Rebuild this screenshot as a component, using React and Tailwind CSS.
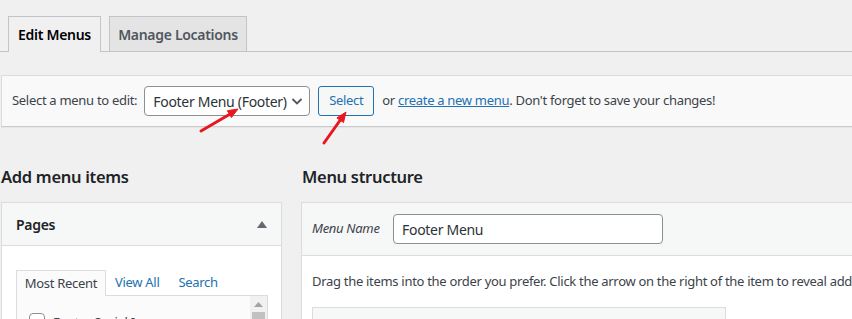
import React from 'react';

const Arrows = () => (
  <svg className="absolute left-0 top-0 pointer-events-none" width="852" height="319">
    <line x1="201" y1="131" x2="231" y2="113.5" stroke="#e8171f" strokeWidth="3" strokeLinecap="round" />
    <polygon points="238,109 231.4,117.5 227.4,110.7" fill="#e8171f" stroke="#e8171f" strokeWidth="1" />
    <line x1="324" y1="143" x2="341" y2="119" stroke="#e8171f" strokeWidth="3" strokeLinecap="round" />
    <polygon points="346,112 343.5,122.5 336.9,117.9" fill="#e8171f" stroke="#e8171f" strokeWidth="1" />
  </svg>
);

const Chevron = () => (
  <svg width="14" height="14" viewBox="0 0 14 14" className="text-[#50575e] shrink-0">
    <path d="M2.5 5 L7 9.5 L11.5 5" fill="none" stroke="currentColor" strokeWidth="1.8" />
  </svg>
);

export default function App() {
  return (
    <div className="relative w-[852px] h-[319px] overflow-hidden bg-[#f0f0f1] font-['Noto_Sans',sans-serif] text-[13px] tracking-[-0.3px] text-[#3c434a]">
      {/* tabs */}
      <div className="flex items-end h-[52px] border-b border-[#c3c4c7] pl-2 gap-2">
        <div className="w-[93px] h-[36px] -mb-px flex items-center justify-center border border-b-0 border-[#c3c4c7] bg-[#f0f0f1] text-[14px] font-semibold text-[#000] whitespace-nowrap">
          Edit Menus
        </div>
        <div className="w-[138px] h-[35px] flex items-center justify-center border border-b-0 border-[#c3c4c7] bg-[#e4e4e5] text-[14px] font-semibold text-[#50575e] whitespace-nowrap">
          Manage Locations
        </div>
      </div>

      {/* select bar */}
      <div className="ml-px mt-[23px] h-[52px] flex items-center gap-2 px-[10px] bg-[#f9f9f9] border border-[#dcdcde] border-r-0 border-b-[#c9cacc] shadow-[0_1px_1px_rgba(0,0,0,0.04)] whitespace-nowrap">
        <span className="-mr-px">Select a menu to edit:</span>
        <div className="w-[166px] h-[30px] flex items-center justify-between pl-2 pr-[5px] bg-white border border-[#8c8f94] rounded-[4px] text-[14px] text-[#2c3338]">
          <span>Footer Menu (Footer)</span>
          <Chevron />
        </div>
        <div className="w-[56px] h-[30px] flex items-center justify-center border border-[#2271b1] rounded-[3px] bg-[#f6f7f7] text-[#2271b1]">
          Select
        </div>
        <span>
          or <span className="text-[#2271b1] underline">create a new menu</span>. Don't forget to save your changes!
        </span>
      </div>

      {/* columns */}
      <div className="flex ml-px mt-[38px] gap-[19px]">
        <div className="w-[281px] shrink-0">
          <h2 className="text-[16.5px] font-semibold text-[#1d2327] leading-[24px] h-[24px]">Add menu items</h2>
          <div className="mt-[13px] border border-[#dcdcde] bg-white">
            <div className="h-[43px] flex items-center justify-between pl-[14px] pr-[14px] bg-[#f6f7f7] border-b border-[#dcdcde]">
              <span className="text-[14px] font-semibold text-[#1d2327]">Pages</span>
              <svg width="10" height="7" viewBox="0 0 10 7"><polygon points="5,0 10,7 0,7" fill="#646970" /></svg>
            </div>
            <div className="pt-[24px] pl-[14px] pr-[13px]">
              <div className="flex items-end text-[13px]">
                <div className="w-[90px] h-[26px] flex items-center justify-center border border-b-0 border-[#dcdcde] bg-[#fbfbfb] text-[#3c434a] -mb-px relative z-10">Most Recent</div>
                <div className="h-[25px] pl-[9px] pr-[10px] flex items-center text-[#2271b1]">View All</div>
                <div className="h-[25px] px-[9px] flex items-center text-[#2271b1]">Search</div>
              </div>
              <div className="h-[40px] flex border border-[#dcdcde] bg-[#fbfbfb]">
                <div className="flex-1 pl-3 pt-[17px] flex items-start gap-2">
                  <div className="w-4 h-4 rounded-[4px] border border-[#8c8f94] bg-white shrink-0" />
                  <span className="text-[13px]">Footer Social Icons</span>
                </div>
                <div className="w-[17px] bg-[#f1f1f1] flex flex-col items-center pt-[6px]">
                  <svg width="9" height="5" viewBox="0 0 9 5"><polygon points="4.5,0 9,5 0,5" fill="#a3a3a3" /></svg>
                  <div className="mt-[5px] w-[13px] h-[20px] bg-[#c1c1c1]" />
                </div>
              </div>
            </div>
          </div>
        </div>

        <div className="flex-1 min-w-0">
          <h2 className="text-[16.5px] font-semibold text-[#1d2327] leading-[24px] h-[24px] pl-px">Menu structure</h2>
          <div className="mt-[13px] border border-[#dcdcde] border-r-0 bg-white h-[200px] overflow-hidden">
            <div className="h-[53px] flex items-center pl-[10px] bg-[#f6f7f7] border-b border-[#dcdcde]">
              <span className="italic text-[13px] text-[#3c434a] w-[81px]">Menu Name</span>
              <div className="w-[270px] h-[30px] flex items-center px-[8px] bg-white border border-[#8c8f94] rounded-[4px] text-[14px] text-[#2c3338]">
                Footer Menu
              </div>
            </div>
            <div className="pl-[10px] pt-[15px]">
              <p className="whitespace-nowrap leading-[20px]">Drag the items into the order you prefer. Click the arrow on the right of the item to reveal additional configuration options.</p>
              <div className="mt-[16px] w-[414px] h-[40px] border border-[#dcdcde] bg-[#f6f7f7]" />
            </div>
          </div>
        </div>
      </div>

      <Arrows />
    </div>
  );
}
